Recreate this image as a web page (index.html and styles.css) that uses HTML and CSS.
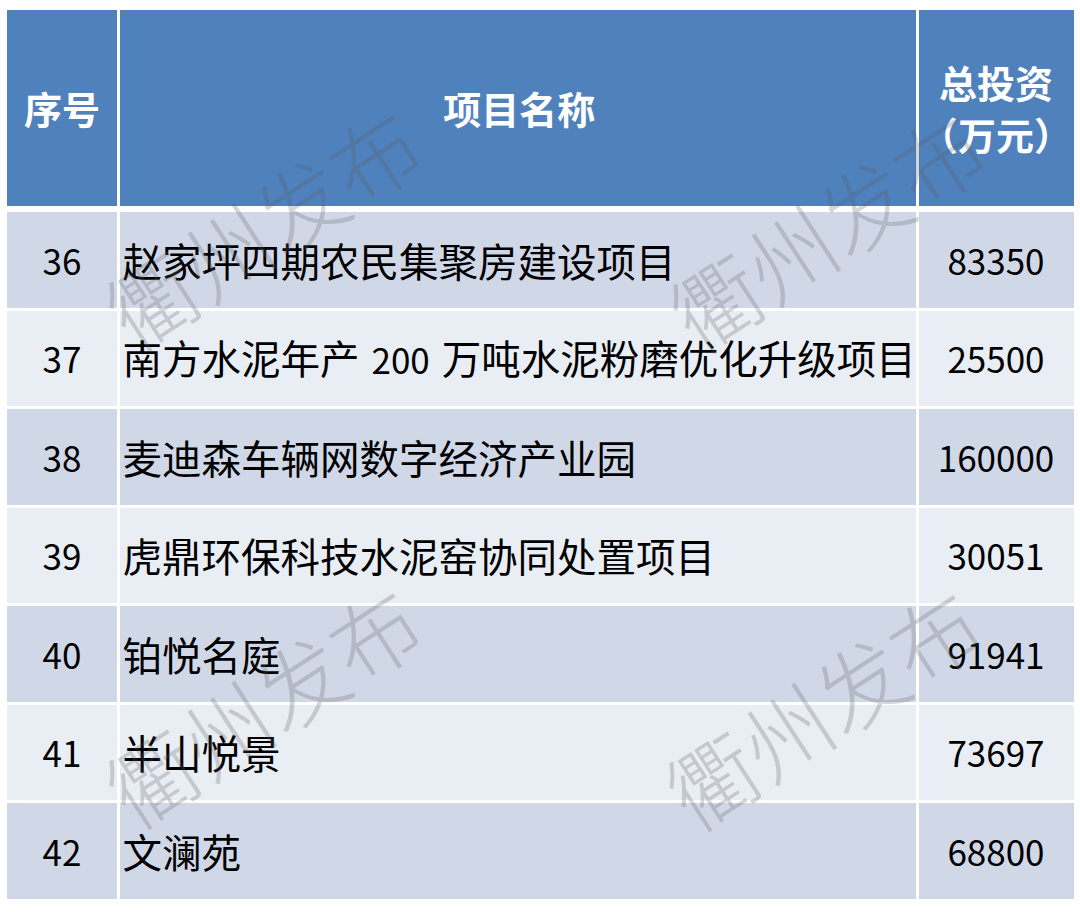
FILE: index.html
```html
<!DOCTYPE html>
<html lang="zh-CN">
<head>
<meta charset="utf-8">
<title>项目表</title>
<link rel="stylesheet" href="styles.css">
</head>
<body>
<div class="page">
  <div class="table">
    <div class="cell head c1">序号</div>
    <div class="cell head c2">项目名称</div>
    <div class="cell head c3"><span>总投资</span><span class="paren">（万元）</span></div>

    <div class="cell dark c1 num">36</div>
    <div class="cell dark c2"><span>赵家坪四期农民集聚房建设项目</span></div>
    <div class="cell dark c3 num">83350</div>

    <div class="cell light c1 num">37</div>
    <div class="cell light c2"><span>南方水泥年产<span class="num gap">200</span>万吨水泥粉磨优化升级项目</span></div>
    <div class="cell light c3 num">25500</div>

    <div class="cell dark c1 num">38</div>
    <div class="cell dark c2"><span>麦迪森车辆网数字经济产业园</span></div>
    <div class="cell dark c3 num">160000</div>

    <div class="cell light c1 num">39</div>
    <div class="cell light c2"><span>虎鼎环保科技水泥窑协同处置项目</span></div>
    <div class="cell light c3 num">30051</div>

    <div class="cell dark c1 num">40</div>
    <div class="cell dark c2"><span>铂悦名庭</span></div>
    <div class="cell dark c3 num">91941</div>

    <div class="cell light c1 num">41</div>
    <div class="cell light c2"><span>半山悦景</span></div>
    <div class="cell light c3 num">73697</div>

    <div class="cell dark c1 num">42</div>
    <div class="cell dark c2"><span>文澜苑</span></div>
    <div class="cell dark c3 num">68800</div>
  </div>

  <div class="wm wm1">衢州发布</div>
  <div class="wm wm2">衢州发布</div>
  <div class="wm wm3">衢州发布</div>
  <div class="wm wm4">衢州发布</div>
</div>
</body>
</html>
```

FILE: styles.css
```css
html, body {
  margin: 0;
  padding: 0;
  background: #ffffff;
}

body {
  font-family: "Noto Sans CJK SC", "Noto Sans", sans-serif;
  color: #000;
}

.page {
  position: relative;
  width: 1080px;
  height: 912px;
  overflow: hidden;
  padding: 10px 0 0 7px;
  box-sizing: border-box;
}

.table {
  display: grid;
  grid-template-columns: 110px 796.5px 155px;
  grid-template-rows: 199px repeat(7, 95.5px);
  column-gap: 2.5px;
  row-gap: 3px;
  background: #ffffff;
  width: 1066px;
}

.cell {
  display: flex;
  align-items: center;
  font-size: 39.5px;
  line-height: 52px;
  white-space: nowrap;
}

.head {
  background: #4f81bd;
  color: #ffffff;
  font-weight: 700;
  font-size: 38px;
  justify-content: center;
  margin-bottom: 3px;
}

.head.c3 {
  flex-direction: column;
  justify-content: center;
}

.paren {
  font-feature-settings: "halt";
}

.dark {
  background: #d0d8e8;
}

.light {
  background: #e9edf4;
}

.c1, .c3 {
  justify-content: center;
}

.c2 {
  padding-left: 3px;
}

.num {
  font-size: 35px;
}

.gap {
  margin: 0 12px 0 12px;
}

.wm {
  position: absolute;
  transform: translate(-50%, -50%) rotate(-33deg);
  font-family: "Noto Sans CJK SC", sans-serif;
  font-weight: 300;
  font-size: 88px;
  line-height: 1;
  white-space: nowrap;
  color: rgba(90, 90, 90, 0.25);
  pointer-events: none;
}

.wm1 { left: 262px; top: 226px; }
.wm2 { left: 826px; top: 228px; }
.wm3 { left: 262px; top: 704px; }
.wm4 { left: 822px; top: 706px; }
```
